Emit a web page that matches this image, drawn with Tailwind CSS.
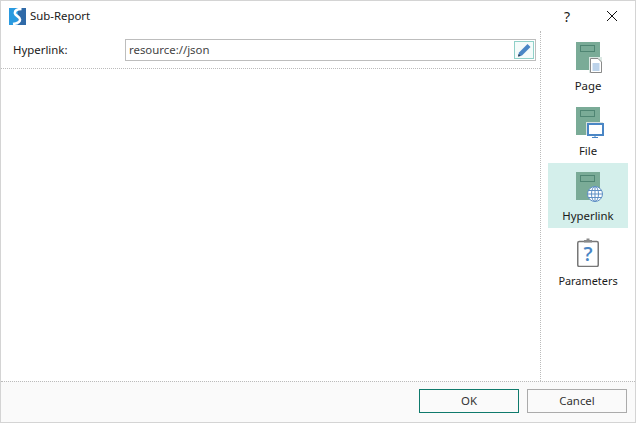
<!DOCTYPE html>
<html lang="en">
<head>
  <meta charset="UTF-8">
  <title>Sub-Report</title>
  <script src="https://cdn.jsdelivr.net/npm/@tailwindcss/browser@4"></script>
</head>
<body class="bg-white">
  <div class="w-[636px] h-[423px] flex flex-col border border-[#d4d4d4] bg-white text-[11.4px] text-[#1a1a1a] font-['Noto_Sans','Open_Sans',sans-serif] overflow-hidden">
    <!-- Title bar -->
    <div class="h-[30px] flex items-center pl-[8px] shrink-0">
      <svg width="17" height="17" viewBox="0 0 17 17">
        <rect width="9" height="17" fill="#2a9ae0"/>
        <rect x="9" width="8" height="17" fill="#2f6aa8"/>
        <path d="M12.5 1C8 1 5.5 2.5 6 5.5C6.500 8 11 8.500 11 11.500C11 14 8 15.500 4 16" fill="none" stroke="#fff" stroke-width="2.600"/>
      </svg>
      <span class="ml-[4px]">Sub-Report</span>
      <span class="ml-auto text-[14px] mr-[36px]">?</span>
      <svg class="mr-[17px]" width="12" height="12" viewBox="0 0 12 12">
        <path d="M1 1L11 11M11 1L1 11" stroke="#111" stroke-width="1" fill="none"/>
      </svg>
    </div>

    <div class="flex-1 flex min-h-0">
      <!-- Main -->
      <div class="flex-1 min-w-0">
        <div class="h-[38px] flex items-start pt-[8px] pl-[12px] pr-[4px] border-b border-dotted border-[#bbb]">
          <span class="w-[112px] leading-[22px]">Hyperlink:</span>
          <div class="flex-1 h-[22px] border border-[#bdbdbd] flex items-center pl-[3px] pr-[1px]">
            <span class="text-[#444]">resource://json</span>
            <div class="ml-auto w-[20px] h-[18px] border-[1.5px] border-[#8fd0c8] bg-[#f4fbfa] flex items-center justify-center">
              <svg width="15" height="14" viewBox="0 0 15 14">
                <path d="M1 13.500L2 9.500L10.500 1L13.500 4L5 12.500Z" fill="#4a86c5"/>
                <path d="M1 13.500L1.600 11L3.800 13Z" fill="#2d3d4d"/>
              </svg>
            </div>
          </div>
        </div>
      </div>

      <!-- Sidebar -->
      <div class="w-[95px] shrink-0 border-l border-dotted border-[#bbb] pt-[2px] pl-[7px] pr-[7px]">
        <div class="h-[65px] flex flex-col items-center pt-[9px]">
          <div class="relative w-[24px] h-[28px] bg-[#7aab97]">
            <div class="absolute left-[4px] top-[3px] w-[15px] h-[7px] border-[1.5px] border-[#4f8573]"></div>
            <svg class="absolute left-[13px] top-[15px]" width="13" height="16" viewBox="0 0 13 16">
              <path d="M0 0H13V16H0Z" fill="#dbe8e3"/>
              <path d="M1.500 1.500H9L12.500 5V15.500H1.500Z" fill="#fff" stroke="#8a8a8a"/>
              <path d="M3.500 7H10.500M3.500 9H10.500M3.500 11H10.500M3.500 13H10.500" stroke="#7ba7d6"/>
            </svg>
          </div>
          <span class="mt-[7px] leading-[18px]">Page</span>
        </div>
        <div class="h-[65px] flex flex-col items-center pt-[9px]">
          <div class="relative w-[24px] h-[28px] bg-[#7aab97]">
            <div class="absolute left-[4px] top-[3px] w-[15px] h-[7px] border-[1.5px] border-[#4f8573]"></div>
            <svg class="absolute left-[10px] top-[15px]" width="18" height="17" viewBox="0 0 18 17">
              <rect x="0" y="0" width="17" height="13" fill="#d9e3e0"/>
              <rect x="2" y="2" width="15" height="11" fill="#fff" stroke="#4a86c5" stroke-width="2"/>
              <path d="M9 13V15M6 15.500H12" stroke="#4a86c5"/>
            </svg>
          </div>
          <span class="mt-[7px] leading-[18px]">File</span>
        </div>
        <div class="h-[65px] flex flex-col items-center pt-[9px] bg-[#d4efeb]">
          <div class="relative w-[24px] h-[28px] bg-[#7aab97]">
            <div class="absolute left-[4px] top-[3px] w-[15px] h-[7px] border-[1.5px] border-[#4f8573]"></div>
            <svg class="absolute left-[11px] top-[14px]" width="16" height="16" viewBox="0 0 16 16">
              <circle cx="8" cy="8" r="7.500" fill="#fff" stroke="#5f8fc4"/>
              <ellipse cx="8" cy="8" rx="3.500" ry="7.500" fill="none" stroke="#5f8fc4"/>
              <path d="M8 .5V15.500M.5 8H15.500M1.800 4.500H14.200M1.800 11.500H14.200" stroke="#5f8fc4" fill="none"/>
            </svg>
          </div>
          <span class="mt-[7px] leading-[18px]">Hyperlink</span>
        </div>
        <div class="h-[65px] flex flex-col items-center pt-[10px]">
          <svg width="22" height="29" viewBox="0 0 22 29">
            <rect x=".75" y="3.500" width="20.500" height="25" rx="1.500" fill="#fff" stroke="#777" stroke-width="1.500"/>
            <path d="M7 4.500V2H9.500V.5H12.500V2H15V4.500Z" fill="#8a8a8a"/>
            <text x="11" y="23" text-anchor="middle" font-size="20" font-weight="600" fill="#4a86c5" font-family="Open Sans, sans-serif">?</text>
          </svg>
          <span class="mt-[5px] leading-[18px] text-[10.9px]">Parameters</span>
        </div>
      </div>
    </div>

    <!-- Footer -->
    <div class="h-[41px] shrink-0 bg-[#fafafa] border-t border-dotted border-[#bbb] flex items-start justify-end gap-[8px] pt-[7px] pr-[8px]">
      <button class="w-[100px] h-[24px] border border-[#0f7a6c] text-[#333]">OK</button>
      <button class="w-[100px] h-[24px] border border-[#ababab] text-[#333]">Cancel</button>
    </div>
  </div>
</body>
</html>
